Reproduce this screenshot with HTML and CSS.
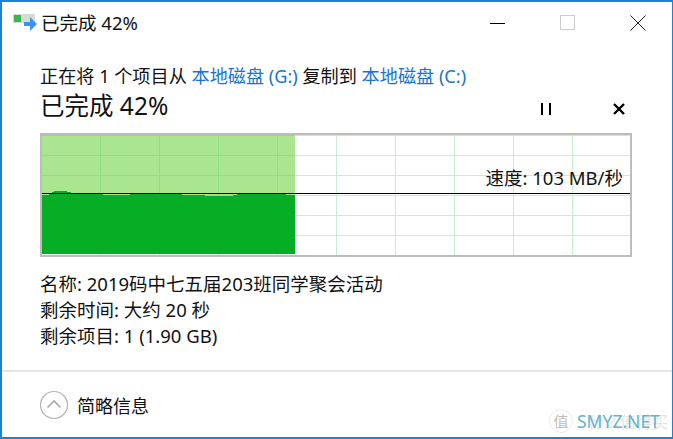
FILE: index.html
```html
<!DOCTYPE html>
<html lang="zh-CN">
<head>
    <meta charset="UTF-8">
    <meta name="viewport" content="width=device-width, initial-scale=1.0">
    <title>已完成 42%</title>
    <link rel="stylesheet" href="styles.css">
</head>
<body>
    <div class="window">
        <div class="titlebar">
            <svg class="app-icon" width="24" height="20" viewBox="0 0 24 20">
                <rect x="0" y="1" width="22" height="9" fill="#d9d9d9"/>
                <rect x="1" y="2" width="7" height="7" fill="#3cb54a"/>
                <path d="M11 9h6V4l7 7-7 7v-5h-6z" fill="#3a96e4"/>
            </svg>
            <span class="title">已完成 42%</span>
            <div class="controls">
                <svg width="16" height="16" viewBox="0 0 16 16"><path d="M0 8.5h15" stroke="#000"/></svg>
                <svg width="16" height="16" viewBox="0 0 16 16"><rect x="0.5" y="0.5" width="14" height="14" fill="none" stroke="#ccc"/></svg>
                <svg width="16" height="16" viewBox="0 0 16 16"><path d="M0.5 0.5l15 15M15.5 0.5l-15 15" stroke="#222" fill="none"/></svg>
            </div>
        </div>

        <div class="content">
            <p class="copy-line">正在将 1 个项目从 <span class="link">本地磁盘 (G:)</span> 复制到 <span class="link">本地磁盘 (C:)</span></p>
            <div class="heading-row">
                <h1 class="heading">已完成 42%</h1>
                <div class="actions">
                    <svg width="12" height="12" viewBox="0 0 12 12"><path d="M1 0h2v12H1zM9 0h2v12H9z" fill="#000"/></svg>
                    <svg width="12" height="12" viewBox="0 0 12 12"><path d="M1 1l10 10M11 1L1 11" stroke="#000" stroke-width="2.4"/></svg>
                </div>
            </div>

            <div class="graph">
                <div class="done"></div>
                <svg class="throughput" width="253" height="119" viewBox="0 0 253 119">
                    <path d="M0 60H7V59H10V57H12V56H25V57H29V59H61V60H88V59H140V60H163V61H191V60H195V59H244V60H253V119H0z" fill="#06ae25"/>
                </svg>
                <div class="speed-line"></div>
                <div class="speed">速度: 103 MB/秒</div>
            </div>

            <div class="details">
                <div>名称: 2019码中七五届203班同学聚会活动</div>
                <div>剩余时间: 大约 20 秒</div>
                <div>剩余项目: 1 (1.90 GB)</div>
            </div>
        </div>

        <div class="footer">
            <svg width="30" height="30" viewBox="0 0 30 30">
                <circle cx="15" cy="15" r="13.5" fill="none" stroke="#b4b4b4" stroke-width="1.2"/>
                <path d="M8.5 17.5L15 11l6.5 6.5" fill="none" stroke="#a8a8a8" stroke-width="1.6"/>
            </svg>
            <span class="footer-text">简略信息</span>
        </div>

        <div class="watermark">
            <span class="wm-logo">值</span>
            <span class="wm-site">SMYZ.NET</span>
            <span class="wm-ghost">什么值得买</span>
        </div>
    </div>
</body>
</html>
```

FILE: styles.css
```css
html, body {
    margin: 0;
    padding: 0;
}
body {
    width: 673px;
    height: 439px;
    overflow: hidden;
    background-color: #fff;
    color: #111;
    font-family: "Noto Sans", "Noto Sans CJK SC", sans-serif;
    font-size: 18px;
}
.window {
    position: relative;
    box-sizing: border-box;
    width: 673px;
    height: 439px;
    display: flex;
    flex-direction: column;
    border: 1px solid #1883d7;
    border-width: 2px 1px 2px 2px;
}
.titlebar {
    height: 40px;
    display: flex;
    align-items: center;
    padding-left: 11px;
    flex-shrink: 0;
}
.app-icon {
    margin-right: 4px;
    margin-top: 2px;
}
.title {
    font-size: 18.5px;
}
.controls {
    margin-left: auto;
    display: flex;
    gap: 54px;
    padding-right: 26px;
    padding-top: 1px;
}
.content {
    flex: 1;
    padding: 21px 0 0 38px;
}
.copy-line {
    margin: 0;
    height: 25px;
    line-height: 26px;
    font-size: 18.15px;
    white-space: nowrap;
}
.link {
    color: #1a73d0;
}
.heading-row {
    display: flex;
    align-items: center;
    width: 592px;
    height: 36px;
}
.heading {
    margin: 0;
    font-size: 24.5px;
    font-weight: normal;
    line-height: 36px;
}
.actions {
    margin-left: auto;
    display: flex;
    gap: 61px;
    padding-right: 7px;
    padding-top: 5px;
}
.graph {
    position: relative;
    box-sizing: border-box;
    width: 592px;
    height: 124px;
    margin-top: 9px;
    border: 2px solid #bcbcbc;
    background-color: #fff;
    background-image:
        linear-gradient(to right, #c6eed0 1px, transparent 1px),
        linear-gradient(to bottom, #c6eed0 1px, transparent 1px);
    background-size: 59px 100%, 100% 20px;
    background-position: 58px 0, 0 20px;
}
.done {
    position: absolute;
    left: 0;
    top: 0;
    width: 253px;
    height: 119px;
    background-color: #aae68f;
    background-image:
        linear-gradient(to right, #8fdf7e 1px, transparent 1px),
        linear-gradient(to bottom, #8fdf7e 1px, transparent 1px);
    background-size: 59px 100%, 100% 20px;
    background-position: 58px 0, 0 20px;
}
.throughput {
    position: absolute;
    left: 0;
    top: 0;
    display: block;
}
.speed-line {
    position: absolute;
    left: 0;
    right: 0;
    top: 58px;
    height: 1px;
    background-color: #000;
}
.speed {
    position: absolute;
    right: 7px;
    top: 30px;
    font-size: 18.5px;
    line-height: 26px;
    white-space: nowrap;
}
.details {
    margin-top: 14px;
    font-size: 18.5px;
    line-height: 26px;
}
.footer {
    height: 67px;
    flex-shrink: 0;
    box-sizing: border-box;
    border-top: 2px solid #e6e6e6;
    display: flex;
    align-items: center;
    padding-left: 37px;
    gap: 8px;
}
.footer-text {
    font-size: 18px;
}
.watermark {
    position: absolute;
    right: 4px;
    bottom: 3px;
    width: 119px;
    height: 26px;
    display: flex;
    align-items: center;
}
.wm-logo {
    width: 22px;
    height: 22px;
    flex-shrink: 0;
    margin-right: 4px;
    font-size: 15px;
    line-height: 22px;
    text-align: center;
    color: #bdbdbd;
    border: 1px solid #ececec;
    border-radius: 50%;
}
.wm-site {
    position: relative;
    z-index: 1;
    font-size: 17.5px;
    line-height: 22px;
    color: #63b4c8;
}
.wm-ghost {
    position: absolute;
    right: 0;
    top: 4px;
    font-size: 16px;
    line-height: 20px;
    color: #e4e4e4;
    white-space: nowrap;
}
```
